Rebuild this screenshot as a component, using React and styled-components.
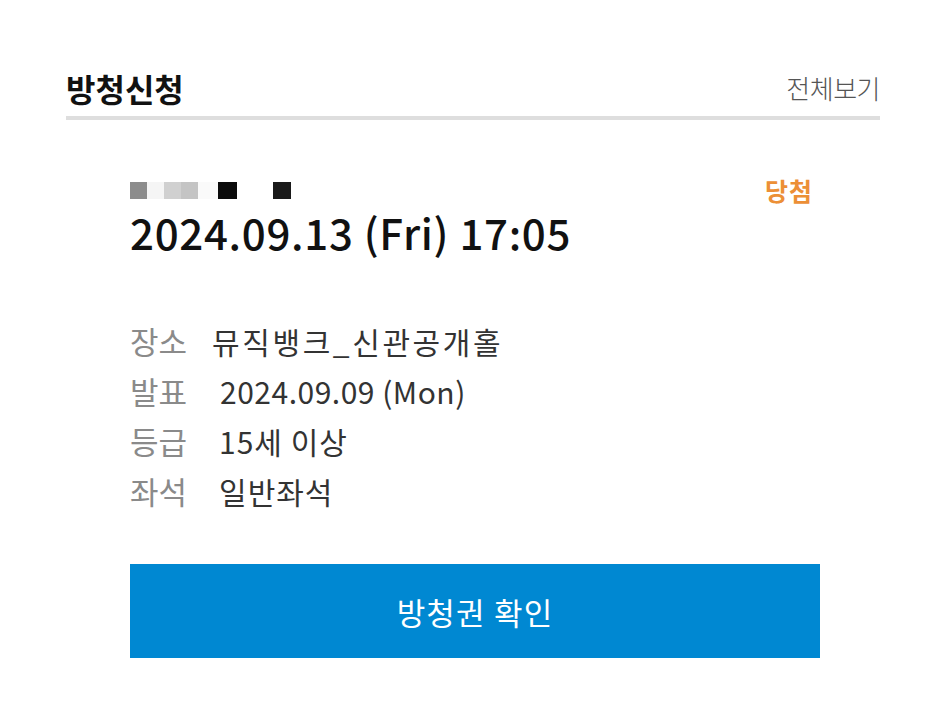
import React from 'react';
import styled, { createGlobalStyle } from 'styled-components';

const GlobalStyle = createGlobalStyle`
  html, body {
    margin: 0;
    padding: 0;
    background: #ffffff;
    font-family: "Noto Sans CJK KR", "Noto Sans", sans-serif;
  }
`;

const Page = styled.div`
  width: 943px;
  height: 702px;
  padding: 66px 63px 0 66px;
  box-sizing: border-box;
`;

const Header = styled.div`
  display: flex;
  align-items: flex-end;
  justify-content: space-between;
  padding-bottom: 6px;
  border-bottom: 4px solid #dedede;
`;

const Title = styled.h2`
  margin: 0;
  font-size: 32px;
  font-weight: 700;
  letter-spacing: 0;
  line-height: 44px;
  color: #111;
`;

const MoreLink = styled.a`
  font-size: 26px;
  font-weight: 300;
  letter-spacing: -0.5px;
  line-height: 44px;
  color: #555;
  text-decoration: none;
`;

const Card = styled.div`
  padding: 57px 60px 0 64px;
`;

const TopRow = styled.div`
  display: flex;
  align-items: center;
  justify-content: space-between;
  height: 26px;
`;

const Masked = styled.div`
  display: flex;
  height: 17px;
`;

const Pixel = styled.span`
  width: ${(p) => p.w || 17}px;
  height: 17px;
  background: ${(p) => p.c};
`;

const Status = styled.span`
  margin-right: 7px;
  font-size: 25px;
  font-weight: 700;
  letter-spacing: 1px;
  color: #ec8f36;
  line-height: 26px;
`;

const DateLine = styled.div`
  margin-top: 3px;
  font-size: 42px;
  font-weight: 500;
  color: #111;
  letter-spacing: 0.7px;
  line-height: 52px;
`;

const InfoList = styled.dl`
  margin: 58px 0 0;
  display: grid;
  grid-template-columns: auto 1fr;
`;

const Label = styled.dt`
  font-size: 31px;
  font-weight: 400;
  color: #8a8a8a;
  line-height: 50px;
`;

const Value = styled.dd`
  margin: 0 0 0 ${(p) => p.indent || 32}px;
  font-size: 30px;
  font-weight: 400;
  color: #333;
  line-height: 50px;
  letter-spacing: ${(p) => p.spacing || 1}px;
`;

const ActionButton = styled.button`
  display: block;
  width: 690px;
  height: 94px;
  margin-top: 48px;
  border: 0;
  background: #0088d2;
  color: #fff;
  font-family: inherit;
  font-size: 31px;
  font-weight: 400;
  letter-spacing: 1.2px;
  cursor: pointer;
`;

const pixels = [
  { c: '#8c8c8c' },
  { c: '#f5f5f5' },
  { c: '#d0d0d0' },
  { c: '#c4c4c4' },
  { c: '#fafafa', w: 20 },
  { c: '#0b0b0b', w: 19 },
  { c: '#ffffff', w: 36 },
  { c: '#1a1a1a', w: 18 },
];

const info = [
  { label: '장소', value: '뮤직뱅크_신관공개홀', indent: 25, spacing: 2.6 },
  { label: '발표', value: '2024.09.09 (Mon)', indent: 33, spacing: 0.5 },
  { label: '등급', value: '15세 이상' },
  { label: '좌석', value: '일반좌석' },
];

export default function App() {
  return (
    <Page>
      <GlobalStyle />
      <Header>
        <Title>방청신청</Title>
        <MoreLink href="#">전체보기</MoreLink>
      </Header>
      <Card>
        <TopRow>
          <Masked>
            {pixels.map((p, i) => (
              <Pixel key={i} c={p.c} w={p.w} />
            ))}
          </Masked>
          <Status>당첨</Status>
        </TopRow>
        <DateLine>2024.09.13 (Fri) 17:05</DateLine>
        <InfoList>
          {info.map((row) => (
            <React.Fragment key={row.label}>
              <Label>{row.label}</Label>
              <Value indent={row.indent} spacing={row.spacing}>
                {row.value}
              </Value>
            </React.Fragment>
          ))}
        </InfoList>
        <ActionButton>방청권 확인</ActionButton>
      </Card>
    </Page>
  );
}
